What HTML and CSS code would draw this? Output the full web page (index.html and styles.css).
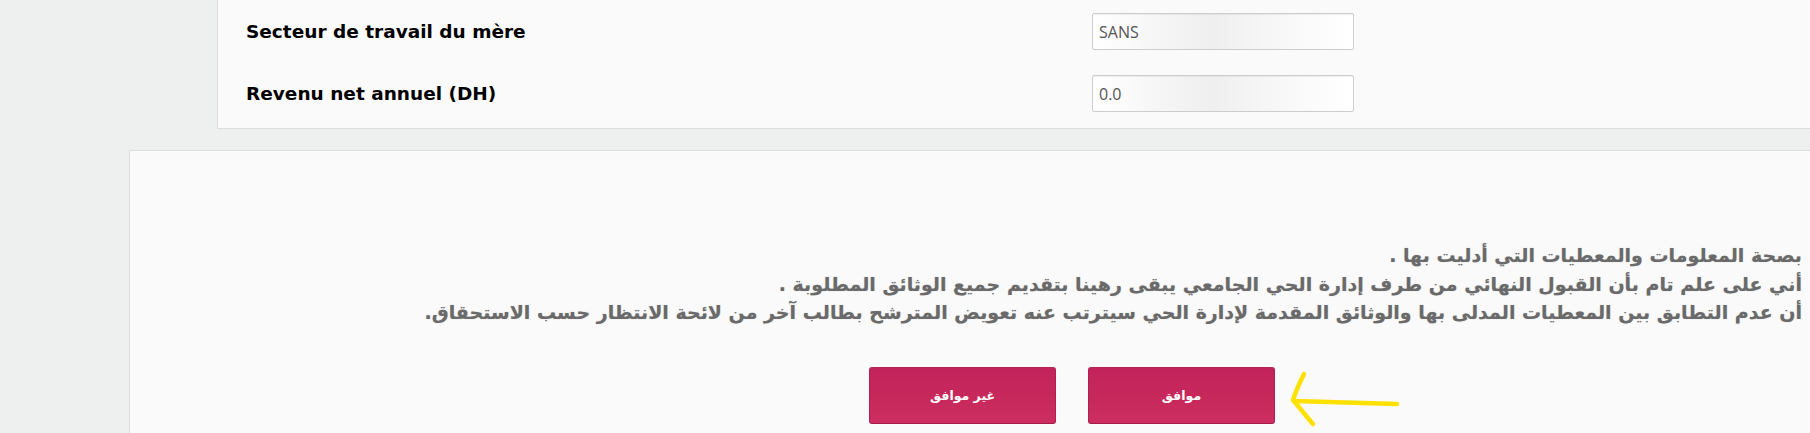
FILE: index.html
```html
<!DOCTYPE html>
<html lang="fr">
<head>
<meta charset="utf-8">
<title>Formulaire</title>
<link rel="stylesheet" href="styles.css">
</head>
<body>
<div class="page">
  <section class="card info-card">
    <div class="row">
      <label class="label">Secteur de travail du mère</label>
      <div class="field"><input class="input" type="text" value="SANS" readonly></div>
    </div>
    <div class="row">
      <label class="label">Revenu net annuel (DH)</label>
      <div class="field"><input class="input" type="text" value="0.0" readonly></div>
    </div>
  </section>

  <section class="card confirm-card">
    <p class="declaration" dir="rtl" lang="ar">
      بصحة المعلومات والمعطيات التي أدليت بها .<br>
      أني على علم تام بأن القبول النهائي من طرف إدارة الحي الجامعي يبقى رهينا بتقديم جميع الوثائق المطلوبة .<br>
      أن عدم التطابق بين المعطيات المدلى بها والوثائق المقدمة لإدارة الحي سيترتب عنه تعويض المترشح بطالب آخر من لائحة الانتظار حسب الاستحقاق.
    </p>
    <div class="actions" dir="rtl">
      <button class="btn" type="button" lang="ar">موافق</button>
      <button class="btn" type="button" lang="ar">غير موافق</button>
      <svg class="arrow" width="120" height="64" viewBox="0 0 120 64" aria-hidden="true">
        <path d="M14 7 C 10 15, 6 24, 3 33 C 10 41, 16 49, 23 57" fill="none" stroke="#ffe100" stroke-width="4.5" stroke-linecap="round" stroke-linejoin="round"/>
        <path d="M4 34 C 40 35, 80 36, 107 37" fill="none" stroke="#ffe100" stroke-width="4.5" stroke-linecap="round"/>
      </svg>
    </div>
  </section>
</div>
</body>
</html>
```

FILE: styles.css
```css
* { box-sizing: border-box; }

html, body {
  margin: 0;
  padding: 0;
}

body {
  background: #eef0ef;
  font-family: "DejaVu Sans", Verdana, sans-serif;
  overflow: hidden;
}

.page {
  width: 1810px;
  height: 433px;
}

.card {
  background: #fafafa;
  border-left: 1px solid #dcdddc;
}

.info-card {
  margin-left: 217px;
  padding: 13px 0 16px 28px;
  border-bottom: 1px solid #dcdddc;
  display: flex;
  flex-direction: column;
  gap: 25px;
}

.row {
  display: grid;
  grid-template-columns: 846px 262px;
  align-items: center;
}

.label {
  font-weight: bold;
  font-size: 18.5px;
  color: #000;
}

.input {
  display: block;
  width: 262px;
  height: 37px;
  border: 1px solid #cdcdcd;
  border-radius: 2px;
  padding: 0 6px;
  font-family: "Open Sans", "DejaVu Sans", sans-serif;
  font-size: 16px;
  color: #555;
  background: linear-gradient(90deg, #ffffff 0%, #f6f6f6 25%, #efefef 45%, #f7f7f7 70%, #ffffff 100%);
  box-shadow: inset 0 1px 1px rgba(0,0,0,0.06);
  outline: none;
}

.confirm-card {
  margin-top: 21px;
  margin-left: 129px;
  border-top: 1px solid #dcdddc;
  height: 284px;
  padding-top: 90px;
  position: relative;
}

.declaration {
  margin: 0;
  padding-right: 8px;
  text-align: right;
  font-family: "DejaVu Sans", sans-serif;
  font-weight: bold;
  font-size: 19px;
  line-height: 28.5px;
  color: #6a6a6a;
  text-shadow: 0 0 1px rgba(60,60,60,0.35);
}

.actions {
  margin-top: 40px;
  padding-right: 535px;
  display: flex;
  gap: 32px;
  position: relative;
}

.btn {
  width: 187px;
  height: 57px;
  border: 1px solid #b11f52;
  border-top-color: #b32656;
  border-bottom-color: #a51b4b;
  border-radius: 3px;
  background: linear-gradient(180deg, #c2235a 0%, #c7285c 50%, #cc2e62 100%);
  color: #fff;
  font-family: "DejaVu Sans", sans-serif;
  font-weight: bold;
  font-size: 12.5px;
  cursor: pointer;
}

.arrow {
  position: absolute;
  left: 1160px;
  top: 0;
}
```
